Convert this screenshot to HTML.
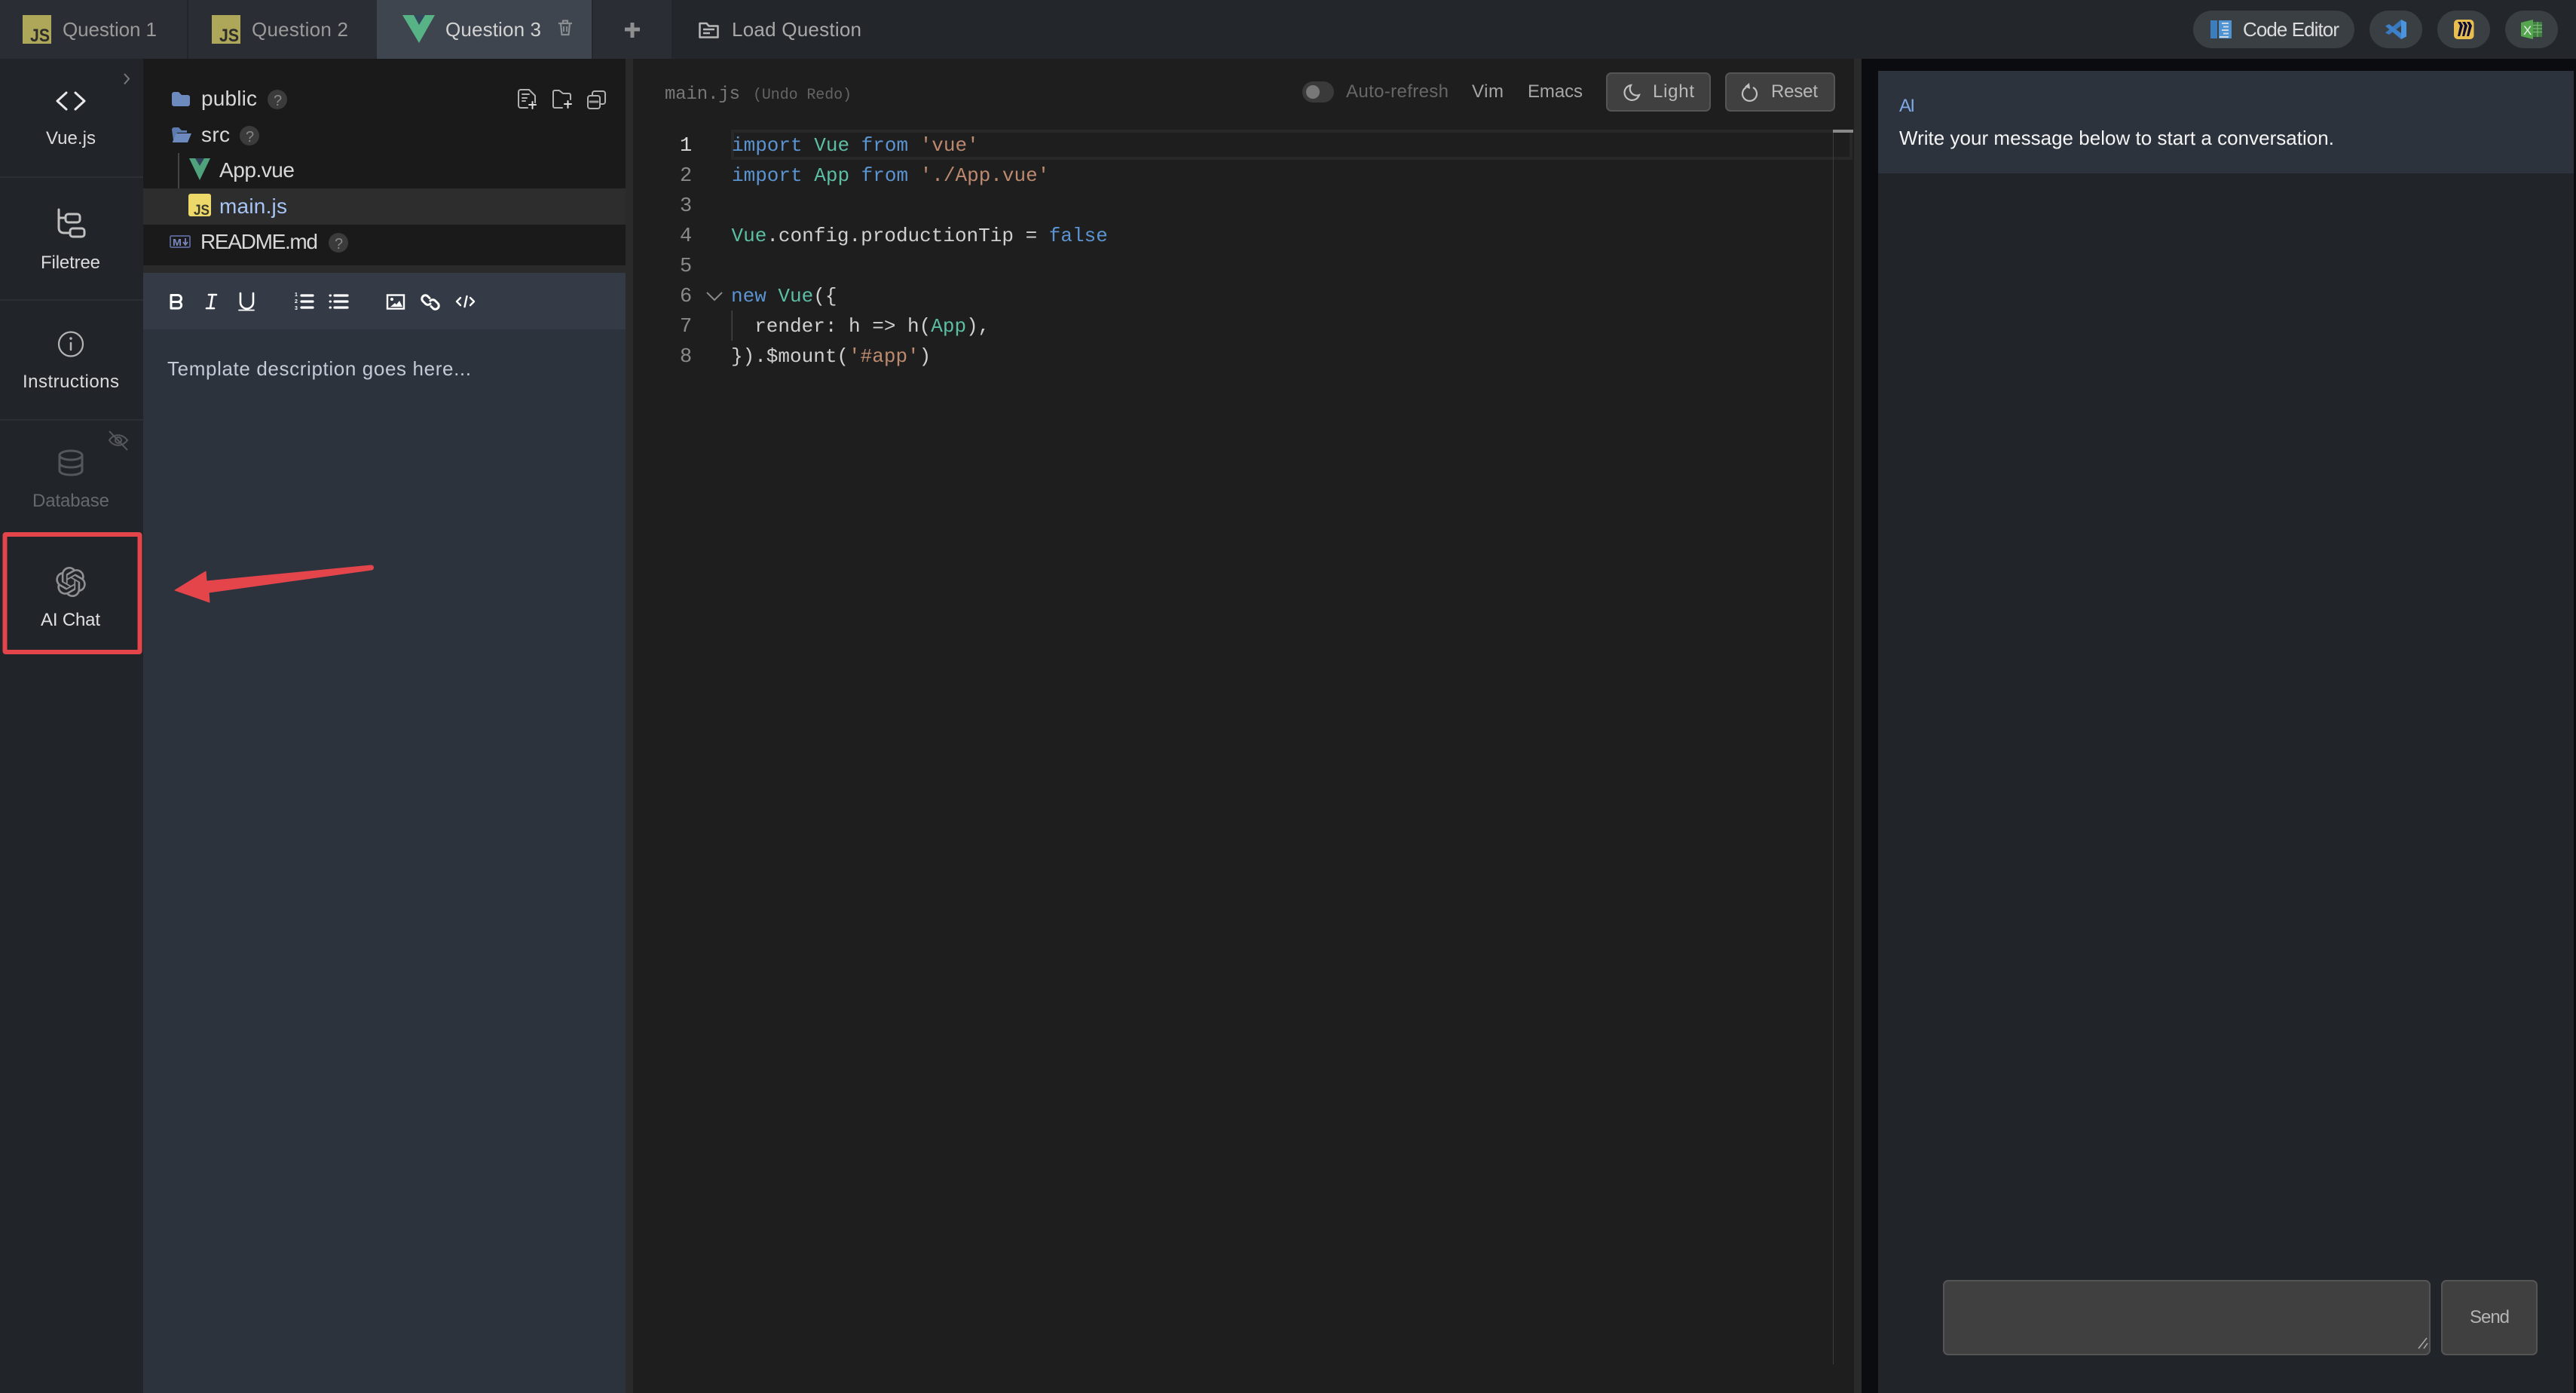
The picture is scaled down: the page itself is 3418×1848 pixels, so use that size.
<!DOCTYPE html>
<html><head><meta charset="utf-8"><title>Question 3</title>
<style>
html,body{margin:0;padding:0;background:#212429;width:3418px;height:1848px;overflow:hidden}
svg{display:block}
text{font-family:"Liberation Sans",sans-serif;white-space:pre}
.m,.m tspan{font-family:"Liberation Mono",monospace;font-size:26px}
.k{fill:#5b94d0}.t{fill:#5cbfa3}.s{fill:#bd8a70}.p{fill:#d0d0d0}
.n{fill:#8a8a8a;font-family:"Liberation Mono",monospace;font-size:27px}
.ic{fill:none;stroke:#c0c0c0;stroke-linecap:round;stroke-linejoin:round}
.tb{fill:none;stroke:#fff;stroke-width:3;stroke-linecap:round;stroke-linejoin:round}
</style></head><body>
<svg width="3418" height="1848" viewBox="0 0 3418 1848" xmlns="http://www.w3.org/2000/svg">
<!-- top bar -->
<rect width="3418" height="78" fill="#23262b"/>
<rect width="891" height="78" fill="#2a2d33"/>
<rect x="248" width="2" height="78" fill="#22252a"/>
<rect x="500" width="285" height="78" fill="#3e454e"/>
<rect x="785" width="2" height="78" fill="#25282d"/>
<!-- tab 1 -->
<rect x="30" y="20" width="38" height="38" fill="#aea658"/>
<text x="40" y="55" font-size="24" font-weight="bold" fill="#2c2d2c" textLength="26" lengthAdjust="spacingAndGlyphs">JS</text>
<text x="83" y="48" font-size="26" fill="#9a9a9a" textLength="125">Question 1</text>
<!-- tab 2 -->
<rect x="281" y="20" width="38" height="38" fill="#aea658"/>
<text x="291" y="55" font-size="24" font-weight="bold" fill="#2c2d2c" textLength="26" lengthAdjust="spacingAndGlyphs">JS</text>
<text x="334" y="48" font-size="26" fill="#9a9a9a" textLength="128">Question 2</text>
<!-- tab 3 -->
<path d="M534 20h17l5 9 5-9h16l-21 37z" fill="#57b286"/>
<path d="M549 20h15l-8 13z" fill="#33465b"/>
<text x="591" y="48" font-size="26" fill="#d2d2d2" textLength="127">Question 3</text>
<g fill="none" stroke="#8a8d92" stroke-width="2.2">
<path d="M741 31h18M744 31l1.500 15h9l1.500-15M747 30v-2.500h6V30"/>
<path d="M748 35v7M752 35v7" stroke-width="1.800"/>
</g>
<path d="M829 39h20M839 30v20" stroke="#8e8f91" stroke-width="5"/>
<!-- load question -->
<path d="M928.500 31h9l3 3.500h12v15h-24z" fill="none" stroke="#b8b8b8" stroke-width="2.500" stroke-linejoin="round"/>
<path d="M933 39h15M933 44h9" stroke="#b8b8b8" stroke-width="2.500"/>
<text x="971" y="48" font-size="26" fill="#a8a8a8" textLength="172">Load Question</text>

<!-- right pills -->
<rect x="2910" y="14" width="214" height="50" rx="25" fill="#3a3f43"/>
<rect x="2933" y="27" width="9" height="24" fill="#3d7dbe"/>
<rect x="2944" y="27" width="17" height="24" fill="#4e93d4"/>
<path d="M2948 31h9M2950 35.500h7M2948 40h9M2950 44.500h7M2945 49h12" stroke="#cfd8e0" stroke-width="2"/>
<text x="2976" y="48" font-size="26" fill="#dcdcdc" textLength="128">Code Editor</text>
<rect x="3144" y="14" width="70" height="50" rx="25" fill="#3a3f43"/>
<path d="M3186 26v8l-16 12-5-2.500z" fill="#3a78bd"/>
<path d="M3165 34.500l5-2.500 16 12v8z" fill="#3d80c8"/>
<path d="M3186 26l7 3.500v19l-7 3.500z" fill="#4b93dc"/>
<rect x="3234" y="14" width="70" height="50" rx="25" fill="#3a3f43"/>
<rect x="3256" y="26" width="26.500" height="26" rx="5" fill="#e8bf4e"/>
<path d="M3261 29h4l3 5-4 14h-3l3-14zM3267 29h4l3 5-4 14h-3l3-14zM3273 29h4l3 5-4 14h-3l3-14z" fill="#0c0c3c"/>
<rect x="3324" y="14" width="70" height="50" rx="25" fill="#3a3f43"/>
<rect x="3361" y="29" width="12" height="20" fill="#3f7f3f"/>
<path d="M3361 33.500h12M3361 38h12M3361 42.500h12M3367 29v20" stroke="#7bb776" stroke-width="1.200"/>
<path d="M3345 30l16-4v26l-16-4z" fill="#56a650"/>
<text x="3348" y="46" font-size="17" fill="#e4efe4">X</text>

<!-- sidebar -->
<rect y="78" width="190" height="1770" fill="#212429"/>
<rect y="234" width="190" height="2" fill="#2b2e34"/>
<rect y="397" width="190" height="2" fill="#2b2e34"/>
<rect y="556" width="190" height="2" fill="#2b2e34"/>
<path d="M165 98l6 6.500-6 7" fill="none" stroke="#77797d" stroke-width="2"/>
<path d="M88 123l-12 11 12 11M100 123l12 11-12 11" fill="none" stroke="#e8e8e8" stroke-width="3" stroke-linecap="round" stroke-linejoin="round"/>
<text x="61" y="191" font-size="24" fill="#dcdcdc" textLength="66">Vue.js</text>
<g class="ic" stroke-width="3">
<path d="M78 278v24c0 5 3 7 7 7h8M78 289h9"/>
<rect x="87" y="284" width="19" height="11" rx="3.500"/>
<rect x="93" y="303" width="19" height="11" rx="3.500"/>
</g>
<text x="54" y="356" font-size="24" fill="#dcdcdc" textLength="79">Filetree</text>
<circle cx="94" cy="456.500" r="16" fill="none" stroke="#b4b4b4" stroke-width="2.200"/>
<path d="M94 455v9" stroke="#b4b4b4" stroke-width="2.500" stroke-linecap="round"/>
<circle cx="94" cy="449" r="1.800" fill="#b4b4b4"/>
<text x="30" y="514" font-size="24" fill="#dcdcdc" textLength="128">Instructions</text>
<g fill="none" stroke="#54575b" stroke-width="3">
<ellipse cx="94" cy="604" rx="15" ry="6"/>
<path d="M79 604v20c0 4 7 6 15 6s15-2 15-6v-20M79 614c0 4 7 6 15 6s15-2 15-6"/>
</g>
<text x="43" y="672" font-size="24" fill="#65686c" textLength="102">Database</text>
<g fill="none" stroke="#54575b" stroke-width="2">
<path d="M145 584c6-9 17-9 24 0-7 9-18 9-24 0z"/><circle cx="157" cy="584" r="4"/><path d="M145 572l24 25"/>
</g>
<rect x="6.500" y="709" width="179" height="156" rx="1" fill="none" stroke="#e4454b" stroke-width="6"/>
<g transform="translate(74 752) scale(1.667)">
<path fill="#8f9092" d="M22.2819 9.8211a5.9847 5.9847 0 0 0-.5157-4.9108 6.0462 6.0462 0 0 0-6.5098-2.9A6.0651 6.0651 0 0 0 4.9807 4.1818a5.9847 5.9847 0 0 0-3.9977 2.9 6.0462 6.0462 0 0 0 .7427 7.0966 5.98 5.98 0 0 0 .511 4.9107 6.051 6.051 0 0 0 6.5146 2.9001A5.9847 5.9847 0 0 0 13.2599 24a6.0557 6.0557 0 0 0 5.7718-4.2058 5.9894 5.9894 0 0 0 3.9977-2.9001 6.0557 6.0557 0 0 0-.7475-7.0729zm-9.022 12.6081a4.4755 4.4755 0 0 1-2.8764-1.0408l.1419-.0804 4.7783-2.7582a.7948.7948 0 0 0 .3927-.6813v-6.7369l2.02 1.1686a.071.071 0 0 1 .038.052v5.5826a4.504 4.504 0 0 1-4.4945 4.4944zm-9.6607-4.1254a4.4708 4.4708 0 0 1-.5346-3.0137l.142.0852 4.783 2.7582a.7712.7712 0 0 0 .7806 0l5.8428-3.3685v2.3324a.0804.0804 0 0 1-.0332.0615L9.74 19.9502a4.4992 4.4992 0 0 1-6.1408-1.6464zM2.3408 7.8956a4.485 4.485 0 0 1 2.3655-1.9728V11.6a.7664.7664 0 0 0 .3879.6765l5.8144 3.3543-2.0201 1.1685a.0757.0757 0 0 1-.071 0l-4.8303-2.7865A4.504 4.504 0 0 1 2.3408 7.872zm16.5963 3.8558L13.1038 8.364 15.1192 7.2a.0757.0757 0 0 1 .071 0l4.8303 2.7913a4.4944 4.4944 0 0 1-.6765 8.1042v-5.6772a.79.79 0 0 0-.407-.667zm2.0107-3.0231l-.142-.0852-4.7735-2.7818a.7759.7759 0 0 0-.7854 0L9.409 9.2297V6.8974a.0662.0662 0 0 1 .0284-.0615l4.8303-2.7866a4.4992 4.4992 0 0 1 6.6802 4.66zM8.3065 12.863l-2.02-1.1638a.0804.0804 0 0 1-.038-.0567V6.0742a4.4992 4.4992 0 0 1 7.3757-3.4537l-.142.0805L8.704 5.459a.7948.7948 0 0 0-.3927.6813zm1.0976-2.3654l2.602-1.4998 2.6069 1.4998v2.9994l-2.5974 1.4997-2.6067-1.4997Z"/>
</g>
<text x="54" y="830" font-size="24" fill="#e0e0e0" textLength="79">AI Chat</text>

<!-- file tree panel -->
<rect x="190" y="78" width="640" height="274" fill="#1a1a1a"/>
<rect x="190" y="352" width="640" height="10" fill="#2a2a2a"/>
<rect x="830" y="78" width="10" height="1770" fill="#2a2a2a"/>
<rect x="190" y="250" width="640" height="48" fill="#2d2d2d"/>
<path d="M228 125a3 3 0 0 1 3-3h6l4 4h8a3 3 0 0 1 3 3v9a3 3 0 0 1-3 3h-18a3 3 0 0 1-3-3z" fill="#6d8abf"/>
<text x="267" y="140" font-size="28" fill="#d8d8d8" textLength="74">public</text>
<circle cx="368" cy="132" r="13" fill="#3b3b3b"/><text x="363" y="140" font-size="20" fill="#868686">?</text>
<path d="M228 172a3 3 0 0 1 3-3h6l4 4h7v3h-13l-5 10z" fill="#5d7aae"/>
<path d="M229 188l5-11h20l-5 12h-20z" fill="#6d8abf"/>
<text x="267" y="188" font-size="28" fill="#d8d8d8" textLength="38">src</text>
<circle cx="331" cy="180" r="13" fill="#3b3b3b"/><text x="326" y="188" font-size="20" fill="#868686">?</text>
<rect x="236" y="203" width="2" height="47" fill="#444"/>
<path d="M251 210h11l3 6 3-6h11l-14 29z" fill="#4fa27c"/>
<path d="M259 210h12l-6 10z" fill="#30435a"/>
<text x="291" y="235" font-size="28" fill="#d8d8d8" textLength="100">App.vue</text>
<rect x="250" y="257" width="30" height="30" rx="3" fill="#ecd96a"/>
<text x="257" y="285" font-size="19" font-weight="bold" fill="#3a3a2a" textLength="21" lengthAdjust="spacingAndGlyphs">JS</text>
<text x="291" y="283" font-size="28" fill="#a6c4f5" textLength="90">main.js</text>
<rect x="226" y="313" width="26" height="15" rx="1.500" fill="none" stroke="#55608f" stroke-width="2"/>
<text x="229" y="326" font-size="13" font-weight="bold" fill="#7b88bd" textLength="12" lengthAdjust="spacingAndGlyphs">M</text>
<path d="M246 316v7M243 321l3 4 3-4" fill="none" stroke="#7b88bd" stroke-width="1.800"/>
<text x="266" y="330" font-size="28" fill="#d8d8d8" textLength="156">README.md</text>
<circle cx="449" cy="322" r="13" fill="#3b3b3b"/><text x="444" y="330" font-size="20" fill="#868686">?</text>
<!-- tree tools -->
<g fill="none" stroke="#b0b0b0" stroke-width="2" stroke-linejoin="round" stroke-linecap="round">
<path d="M700 143h-9a3 3 0 0 1-3-3v-18a3 3 0 0 1 3-3h11l8 8v9"/>
<path d="M693 125h9M693 130h6M693 134h4" stroke-width="2"/>
<path d="M702 139h9M706.500 135v9" stroke="#ddd"/>
<path d="M746 143h-10a2 2 0 0 1-2-2v-19a2 2 0 0 1 2-2h6l5 4h8a2 2 0 0 1 2 2v6"/>
<path d="M749 138h9M753.500 134v9" stroke="#ddd"/>
<rect x="780" y="127" width="16" height="17" rx="3"/>
<path d="M786 127v-3a3 3 0 0 1 3-3h11a3 3 0 0 1 3 3v11a3 3 0 0 1-3 3h-4"/>
<path d="M783 135h10" stroke="#999" stroke-width="3"/>
</g>
<!-- desc panel -->
<rect x="190" y="362" width="640" height="75" fill="#343b46"/>
<rect x="190" y="437" width="640" height="1411" fill="#2d333d"/>
<g class="tb">
<path d="M227 391.500h9a4.300 4.300 0 0 1 0 9h-9zM227 400.500h10a4.300 4.300 0 0 1 0 8.500h-10z"/>
<path d="M277 391h10M274 409h10M282 391l-3 18" stroke-width="2.600"/>
<path d="M319 389v12a8.500 8.500 0 0 0 17 0v-12" stroke-width="2.600"/>
<path d="M317 411.500h20" stroke-width="1.800"/>
<path d="M400 392h15M400 400h15M400 408h15" stroke-width="3.200"/>
<path d="M444 392h17M444 400h17M444 408h17" stroke-width="3.200"/>
<path d="M438 392h.5M438 400h.5M438 408h.5" stroke-width="3"/>
<rect x="514" y="391.500" width="22" height="18" stroke-width="2.400" stroke-linecap="butt" stroke-linejoin="miter"/>
<path d="M570 395.500l-2.500-2.500a4.600 4.600 0 0 0-6.500 6.500l3.500 3.500a4.600 4.600 0 0 0 6.500 0" stroke-width="3"/>
<path d="M571 397.500a4.600 4.600 0 0 1 6.500 0l3.500 3.500a4.600 4.600 0 0 1-6.500 6.500l-2.500-2.500" stroke-width="3" transform="translate(0 1.500)"/>
<path d="M611 395l-5 5 5 5M624 395l5 5-5 5M619.500 393l-3 14" stroke-width="2.400"/>
</g>
<text x="391" y="393" font-size="7" font-weight="bold" fill="#fff">1</text>
<text x="391" y="402" font-size="7" font-weight="bold" fill="#fff">2</text>
<text x="391" y="411" font-size="7" font-weight="bold" fill="#fff">3</text>
<circle cx="520" cy="397" r="2" fill="#fff"/>
<path d="M518 407l6-5 2 2 4-5 4 8z" fill="#fff"/>
<text x="222" y="498" font-size="26" fill="#c4c9d6" textLength="403">Template description goes here...</text>
<!-- arrow -->
<path d="M232 783l41-25 1 13 218-21a3 3 0 0 1 1 6l-216 30 1 13z" fill="#e4454b" stroke="#e4454b" stroke-width="1" stroke-linejoin="round"/>

<!-- editor -->
<rect x="840" y="78" width="1620" height="1770" fill="#1e1e1e"/>
<text x="882" y="131" style="font-family:'Liberation Mono',monospace" font-size="24" fill="#787878" textLength="100">main.js</text>
<text x="999" y="131" style="font-family:'Liberation Mono',monospace" font-size="20" fill="#646464" textLength="131">(Undo Redo)</text>
<rect x="1728" y="108" width="42" height="28" rx="14" fill="#3a3a3a"/>
<circle cx="1742" cy="122" r="9" fill="#787878"/>
<text x="1786" y="129" font-size="24" fill="#676767" textLength="136">Auto-refresh</text>
<text x="1953" y="129" font-size="24" fill="#a6a6a6" textLength="42">Vim</text>
<text x="2027" y="129" font-size="24" fill="#a6a6a6" textLength="73">Emacs</text>
<rect x="2132" y="97" width="137" height="50" rx="6" fill="#404040" stroke="#555" stroke-width="2"/>
<path d="M2164 113a10 10 0 1 0 11 13 9 9 0 0 1-11-13z" fill="none" stroke="#c0c0c0" stroke-width="2.200"/>
<text x="2193" y="129" font-size="24" fill="#b8b8b8" textLength="55">Light</text>
<rect x="2290" y="97" width="144" height="50" rx="6" fill="#404040" stroke="#555" stroke-width="2"/>
<path d="M2317 116a9.500 9.500 0 1 0 9 0" fill="none" stroke="#c0c0c0" stroke-width="2.200"/>
<path d="M2321 110l-6 5 7 3z" fill="#c0c0c0"/>
<text x="2350" y="129" font-size="24" fill="#b8b8b8" textLength="62">Reset</text>
<!-- current line -->
<rect x="972" y="174" width="1484" height="36" fill="none" stroke="#282828" stroke-width="4"/>
<rect x="2432" y="172" width="1" height="1638" fill="#3e3e3e"/>
<rect x="2432" y="172" width="27" height="4" fill="#8a8a8a"/>
<!-- numbers -->
<text class="n" x="902" y="200" style="fill:#d8d8d8">1</text>
<text class="n" x="902" y="240">2</text>
<text class="n" x="902" y="280">3</text>
<text class="n" x="902" y="320">4</text>
<text class="n" x="902" y="360">5</text>
<text class="n" x="902" y="400">6</text>
<text class="n" x="902" y="440">7</text>
<text class="n" x="902" y="480">8</text>
<path d="M938 388l10 10 10-10" fill="none" stroke="#8a8a8a" stroke-width="2"/>
<rect x="970.500" y="412" width="1.500" height="40" fill="#444"/>
<!-- code -->
<text class="m" x="971" y="200"><tspan class="k">import</tspan><tspan class="p"> </tspan><tspan class="t">Vue</tspan><tspan class="p"> </tspan><tspan class="k">from</tspan><tspan class="p"> </tspan><tspan class="s">'vue'</tspan></text>
<text class="m" x="971" y="240"><tspan class="k">import</tspan><tspan class="p"> </tspan><tspan class="t">App</tspan><tspan class="p"> </tspan><tspan class="k">from</tspan><tspan class="p"> </tspan><tspan class="s">'./App.vue'</tspan></text>
<text class="m" x="970.500" y="320"><tspan class="t">Vue</tspan><tspan class="p">.config.productionTip = </tspan><tspan class="k">false</tspan></text>
<text class="m" x="970" y="400"><tspan class="k">new</tspan><tspan class="p"> </tspan><tspan class="t">Vue</tspan><tspan class="p">({</tspan></text>
<text class="m" x="970" y="440"><tspan class="p">  render: h =&gt; h(</tspan><tspan class="t">App</tspan><tspan class="p">),</tspan></text>
<text class="m" x="970" y="480"><tspan class="p">}).$mount(</tspan><tspan class="s">'#app'</tspan><tspan class="p">)</tspan></text>
<!-- splitter -->
<rect x="2460" y="78" width="10" height="1770" fill="#2a2a2a"/>
<rect x="2470" y="78" width="948" height="1770" fill="#0b0c10"/>
<!-- chat -->
<rect x="2492" y="94" width="923" height="1754" fill="#212429"/>
<rect x="2492" y="94" width="923" height="136" fill="#2d333d"/>
<text x="2520" y="148" font-size="24" fill="#7ea8e6" textLength="21">AI</text>
<text x="2520" y="192" font-size="26" fill="#f4f4f4" textLength="577">Write your message below to start a conversation.</text>
<rect x="2579" y="1699" width="645" height="98" rx="6" fill="#404040" stroke="#555" stroke-width="2"/>
<path d="M3209 1789l11-14M3216 1789l5-7" stroke="#aaa" stroke-width="1.500"/>
<rect x="3240" y="1699" width="126" height="98" rx="6" fill="#404040" stroke="#555" stroke-width="2"/>
<text x="3277" y="1755" font-size="24" fill="#b4b4b4" textLength="53">Send</text>
</svg>
</body></html>
